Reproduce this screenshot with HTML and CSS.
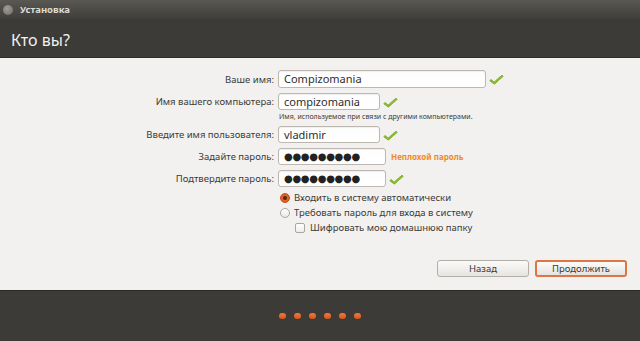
FILE: index.html
```html
<!DOCTYPE html>
<html lang="ru">
<head>
<meta charset="utf-8">
<link rel="stylesheet" href="styles.css">
</head>
<body>
<div class="window">
  <div class="titlebar">
    <span class="close"></span>
    <span class="title">Установка</span>
  </div>
  <div class="header">Кто вы?</div>
  <div class="content">
    <div class="form">
      <label class="lbl">Ваше имя:</label>
      <div class="field"><div class="input w-long tall">Compizomania</div><span class="check"></span></div>

      <label class="lbl">Имя вашего компьютера:</label>
      <div class="field"><div class="input w-short">compizomania</div><span class="check"></span></div>

      <span></span>
      <div class="hint">Имя, используемое при связи с другими компьютерами.</div>

      <label class="lbl">Введите имя пользователя:</label>
      <div class="field"><div class="input w-short">vladimir</div><span class="check"></span></div>

      <label class="lbl">Задайте пароль:</label>
      <div class="field"><div class="input w-pass dots">●●●●●●●●●</div><span class="strength">Неплохой пароль</span></div>

      <label class="lbl">Подтвердите пароль:</label>
      <div class="field"><div class="input w-pass dots">●●●●●●●●●</div><span class="check"></span></div>

      <span></span>
      <div class="options">
        <div class="opt"><span class="radio on"></span>Входить в систему автоматически</div>
        <div class="opt"><span class="radio"></span>Требовать пароль для входа в систему</div>
        <div class="opt sub"><span class="box"></span>Шифровать мою домашнюю папку</div>
      </div>
    </div>
    <div class="buttons">
      <button class="btn">Назад</button>
      <button class="btn primary">Продолжить</button>
    </div>
  </div>
  <div class="footer">
    <span class="dot"></span><span class="dot"></span><span class="dot"></span><span class="dot"></span><span class="dot"></span><span class="dot"></span>
  </div>
</div>
</body>
</html>
```
FILE: styles.css
```css
* { box-sizing: border-box; }
html, body { margin: 0; padding: 0; }
body {
  width: 640px;
  height: 341px;
  overflow: hidden;
  font-family: "Noto Sans", "DejaVu Sans", sans-serif;
  background: #3c3b37;
}
.window {
  display: flex;
  flex-direction: column;
  height: 341px;
}
.titlebar {
  height: 19px;
  display: flex;
  align-items: center;
  padding-left: 3px;
  background: linear-gradient(#5a5853, #4a4844 60%, #3f3e3a);
}
.close {
  width: 10px;
  height: 10px;
  border-radius: 50%;
  background: radial-gradient(circle at 40% 35%, #a09d97, #6e6b66);
  margin-right: 7px;
}
.title {
  color: #dfdbd2;
  font-weight: bold;
  font-size: 9.5px;
}
.header {
  height: 39px;
  background: #3c3b37;
  color: #f2f1f0;
  font-size: 16px;
  padding: 10px 0 0 11px;
  border-bottom: 1px solid #2e2d29;
}
.content {
  height: 232px;
  background: #f2f1f0;
  padding-top: 12px;
  display: flex;
  flex-direction: column;
}
.form {
  display: grid;
  grid-template-columns: 274px auto;
  column-gap: 4px;
  align-items: center;
}
.lbl {
  text-align: right;
  font-size: 9.5px;
  color: #3c3b37;
  margin-bottom: 5px;
}
.field {
  display: flex;
  align-items: center;
  margin-bottom: 5px;
}
.input {
  height: 17px;
  border: 1px solid #bcb8b1;
  border-radius: 3px;
  background: linear-gradient(#fdfdfd, #ffffff);
  box-shadow: inset 0 1px 1px rgba(0,0,0,0.06);
  font-size: 11px;
  color: #2e2e2e;
  padding: 0 5px;
  line-height: 15px;
}
.input.tall { height: 18px; line-height: 16px; }
.w-long { width: 208px; }
.w-short { width: 102px; }
.w-pass { width: 108px; }
.dots {
  font-size: 10px;
  letter-spacing: -0.3px;
  color: #222;
}
.check {
  width: 12px;
  height: 12px;
  margin-left: 4px;
  position: relative;
}
.check::before {
  content: "";
  position: absolute;
  left: 3px;
  top: -1px;
  width: 4px;
  height: 10px;
  border-right: 3px solid #8cb63c;
  border-bottom: 3px solid #8cb63c;
  transform: rotate(38deg) skewX(-10deg);
  border-radius: 1px;
}
.strength {
  margin-left: 5px;
  font-size: 8px;
  font-weight: bold;
  color: #f08a24;
}
.hint {
  font-size: 7px;
  color: #3c3b37;
  margin: -3px 0 4px 1px;
  height: 10px;
}
.options {
  display: flex;
  flex-direction: column;
  gap: 4px;
  margin-top: 0;
}
.opt {
  display: flex;
  align-items: center;
  font-size: 9.5px;
  color: #3c3b37;
  height: 11px;
}
.opt.sub { padding-left: 14px; }
.radio {
  width: 10px;
  height: 10px;
  border-radius: 50%;
  border: 1px solid #aaa6a0;
  background: linear-gradient(#ffffff, #eae8e5);
  margin: 0 4px 0 2px;
}
.radio.on {
  border-color: #c24a18;
  background: radial-gradient(circle, #5a2a14 0 1.5px, #e4652a 2.5px, #d9531b);
}
.box {
  width: 10px;
  height: 10px;
  border-radius: 2px;
  border: 1px solid #aaa6a0;
  background: linear-gradient(#ffffff, #eeece9);
  margin: 0 5px 0 3px;
}
.buttons {
  display: flex;
  justify-content: flex-end;
  gap: 6px;
  padding-right: 13px;
  margin-top: auto;
  margin-bottom: 13px;
}
.btn {
  width: 92px;
  height: 17px;
  font-family: "Noto Sans", "DejaVu Sans", sans-serif;
  font-size: 9.5px;
  color: #3c3b37;
  border: 1px solid #b3afa8;
  border-radius: 3px;
  background: linear-gradient(#fbfbfa, #e6e4e1);
  padding: 0;
}
.btn.primary {
  border: 2px solid #df7542;
}
.footer {
  flex: 1;
  background: #3c3b37;
  border-top: 1px solid #2a2926;
  display: flex;
  justify-content: center;
  align-items: center;
  gap: 8px;
  padding-left: 0;
}
.dot {
  width: 7px;
  height: 6px;
  border-radius: 3px;
  background: linear-gradient(#f07a3c, #d4561c);
}
```
